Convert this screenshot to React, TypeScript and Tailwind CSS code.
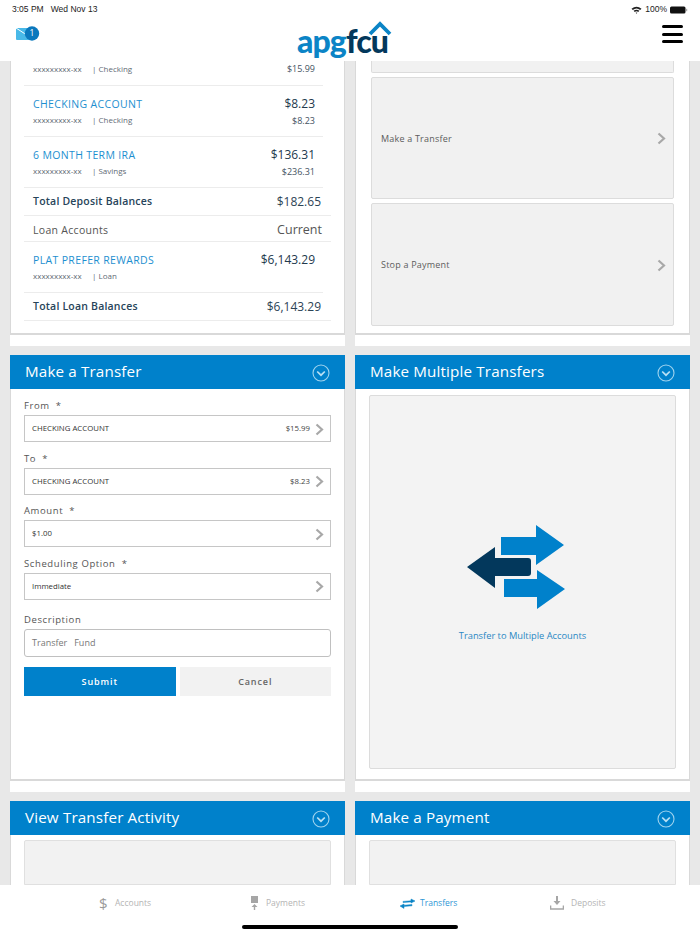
import React from 'react';

const font = { fontFamily: '"Open Sans", sans-serif' };

const Chevron: React.FC = () => (
    <svg width="9" height="13" viewBox="0 0 9 13" className="shrink-0">
        <path d="M1.5 1.5 L7 6.5 L1.5 11.5" fill="none" stroke="#a8a8a8" strokeWidth="2.2" />
    </svg>
);

const PanelHeader: React.FC<{ title: string }> = ({ title }) => (
    <div className="h-[34px] shrink-0 bg-[#0081cb] -mx-px flex items-center justify-between pl-[15px] pr-[15px] text-white">
        <span className="text-[15.2px] tracking-[0.15px] leading-none -mt-[1px]">{title}</span>
        <svg width="18" height="18" viewBox="0 0 18 18" className="mt-[2px]">
            <circle cx="9" cy="9" r="8" fill="none" stroke="#9fd3ee" strokeWidth="1.1" />
            <path d="M5.2 7.5 L9 11.2 L12.8 7.5" fill="none" stroke="#b9e0f4" strokeWidth="1.7" />
        </svg>
    </div>
);

const AccountRow: React.FC<{ name: string; kind: string; amount: string; sub?: string }> = ({ name, kind, amount, sub }) => (
    <div className="h-[51px] mr-[8px] border-b border-[#ececec] pl-[9px] pr-[8px] flex justify-between">
        <div className="pt-[11px]">
            <div className="text-[10.5px] leading-[14px] tracking-[0.35px] text-[#1d8fd0]">{name}</div>
            <div className="mt-[3px] text-[8px] leading-[12px] text-[#5f6b75] flex">
                <span className="w-[59px]">xxxxxxxxx-xx</span>
                <span>| {kind}</span>
            </div>
        </div>
        <div className="pt-[10px] text-right">
            <div className="text-[12px] leading-[16px] text-[#22394d]">{amount}</div>
            {sub && <div className="mt-[3px] text-[9px] leading-[12px] text-[#44535f]">{sub}</div>}
        </div>
    </div>
);

const TotalRow: React.FC<{ label: string; amount: string }> = ({ label, amount }) => (
    <div className="h-[28px] border-b border-[#ececec] pl-[9px] pr-[10px] flex items-center justify-between">
        <span className="text-[10.5px] font-semibold tracking-[0.2px] text-[#27445a]">{label}</span>
        <span className="text-[12px] text-[#2c4355]">{amount}</span>
    </div>
);

const Tile: React.FC<{ label: string; className: string }> = ({ label, className }) => (
    <div className={`${className} bg-[#f1f1f1] border border-[#dcdcdc] rounded-[2px] pt-[1px] pl-[9px] pr-[7px] flex items-center justify-between`}>
        <span className="text-[9px] text-[#5c5c5c] tracking-[0.2px]">{label}</span>
        <Chevron />
    </div>
);

const Field: React.FC<{ label: string; value: string; amount?: string }> = ({ label, value, amount }) => (
    <div className="h-[52.5px]">
        <div className="h-[25px] pt-[9px] text-[9.5px] leading-[14px] tracking-[0.6px] text-[#555]">
            {label}&nbsp;&nbsp;*
        </div>
        <div className="h-[27px] border border-[#c6c6c6] pt-[1px] pl-[7px] pr-[6px] flex items-center">
            <span className="text-[7.8px] text-[#333] flex-1">{value}</span>
            {amount && <span className="text-[7.8px] text-[#444] mr-[5px]">{amount}</span>}
            <Chevron />
        </div>
    </div>
);

const TransferArrows: React.FC = () => (
    <svg width="100" height="86" viewBox="0 0 100 86" className="mr-[13px]">
        <path d="M35 12 H70 V0 L98 20 L70 40 V30 H35 Z" fill="#0081cb" />
        <path d="M38 54 H71 V45 L99 64 L71 84 V72 H38 Z" fill="#0081cb" />
        <path d="M1 42 L29 22 V33 H62 Q65 33 65 36 V48 Q65 51 62 51 H29 V63 Z" fill="#03385c" />
    </svg>
);

const TabItem: React.FC<{ label: string; active?: boolean; icon: React.ReactNode; className: string; gap: string }> = ({ label, active, icon, className, gap }) => (
    <div className={`${className} ${gap} flex items-center text-[8.5px] ${active ? 'text-[#2f97d6]' : 'text-[#b4b4b4]'}`}>
        {icon}
        <span>{label}</span>
    </div>
);

const App: React.FC = () => {
    return (
        <div style={font} className="h-[934px] w-[700px] bg-[#e8e8e8] flex flex-col overflow-hidden">
            {/* status bar + nav */}
            <header className="h-[61px] shrink-0 bg-white relative">
                <div className="h-[17px] pt-[2px] pl-[12px] pr-[12px] flex items-center justify-between text-[8.5px] text-[#222]" style={{ fontFamily: '"Liberation Sans", sans-serif' }}>
                    <span>3:05 PM&nbsp;&nbsp;&nbsp;Wed Nov 13</span>
                    <span className="flex items-center gap-[3px]">
                        <svg width="11" height="8" viewBox="0 0 11 8">
                            <path d="M0.5 2.8 Q5.5 -1.2 10.5 2.8 L9.2 4 Q5.5 1 1.8 4 Z M2.6 4.8 Q5.5 2.6 8.4 4.8 L7.2 6 Q5.5 4.7 3.8 6 Z M4.6 6.8 Q5.5 6 6.4 6.8 L5.5 7.8 Z" fill="#222" />
                        </svg>
                        <span>100%</span>
                        <svg width="18" height="8" viewBox="0 0 18 8">
                            <rect x="0" y="0.5" width="15.5" height="7" rx="1.5" fill="#111" />
                            <rect x="16.2" y="2.8" width="1" height="2.4" fill="#999" />
                        </svg>
                    </span>
                </div>
                <div className="absolute left-[16px] top-[26px] w-[24px] h-[15px]">
                    <svg width="24" height="15" viewBox="0 0 24 15">
                        <rect x="0" y="2" width="18" height="12" rx="1" fill="#49b9e8" />
                        <path d="M0 2 L10 8.5" stroke="#ffffff" strokeWidth="1" />
                        <circle cx="16" cy="7.5" r="7.2" fill="#0b78bd" />
                    </svg>
                    <span className="absolute left-[11px] top-[0.5px] w-[10px] text-center text-[8.5px] text-white">1</span>
                </div>
                <div className="absolute left-[297px] top-[21px] w-[96px] h-[38px]">
                    <span className="absolute left-0 top-[1px] text-[32px] leading-[38px] font-black tracking-[-0.9px] text-[#0b84c6] flex" style={{ fontFamily: 'Lato, sans-serif' }}>
                        apg<span className="text-[#03385c]">fcu</span>
                    </span>
                    <svg width="24" height="15" viewBox="0 0 24 15" className="absolute left-[71px] top-0">
                        <path d="M2 13 L12 3 L22 13" fill="none" stroke="#0b84c6" strokeWidth="3.8" />
                    </svg>
                </div>
                <div className="absolute left-[662px] top-[25px] w-[21px] flex flex-col gap-[4.5px]">
                    <div className="h-[3px] rounded-full bg-black" />
                    <div className="h-[3px] rounded-full bg-black" />
                    <div className="h-[3px] rounded-full bg-black" />
                </div>
            </header>

            <main className="flex-1 overflow-hidden px-[10px]">
                <div className="grid grid-cols-2 gap-x-[10px]">
                    {/* first row, scrolled partly under the header */}
                    <section className="h-[274px] bg-white border-x border-b-2 border-[#d9d9d9] px-[13px]">
                        <div className="h-[25px] mr-[8px] border-b border-[#ececec] pl-[9px] pr-[8px] flex justify-between items-start pt-[2px]">
                            <div className="text-[8px] leading-[12px] text-[#5f6b75] flex">
                                <span className="w-[59px]">xxxxxxxxx-xx</span>
                                <span>| Checking</span>
                            </div>
                            <div className="text-[9px] leading-[12px] text-[#44535f]">$15.99</div>
                        </div>
                        <AccountRow name="CHECKING ACCOUNT" kind="Checking" amount="$8.23" sub="$8.23" />
                        <AccountRow name="6 MONTH TERM IRA" kind="Savings" amount="$136.31" sub="$236.31" />
                        <TotalRow label="Total Deposit Balances" amount="$182.65" />
                        <div className="h-[26px] pt-[4px] border-b border-[#ececec] pl-[9px] pr-[9px] flex items-center justify-between text-[#555]">
                            <span className="text-[10.5px] tracking-[0.3px]">Loan Accounts</span>
                            <span className="text-[12.5px]">Current</span>
                        </div>
                        <AccountRow name="PLAT PREFER REWARDS" kind="Loan" amount="$6,143.29" />
                        <TotalRow label="Total Loan Balances" amount="$6,143.29" />
                    </section>
                    <section className="h-[274px] bg-white border-x border-b-2 border-[#d9d9d9] px-[15px] flex flex-col gap-[4px]">
                        <div className="h-[12px] shrink-0 bg-[#f1f1f1] border border-t-0 border-[#dcdcdc] rounded-b-[2px]" />
                        <Tile label="Make a Transfer" className="h-[122px] shrink-0" />
                        <Tile label="Stop a Payment" className="h-[123px] shrink-0" />
                    </section>
                    <div className="h-[11px] bg-white" />
                    <div className="h-[11px] bg-white" />
                    <div className="col-span-2 h-[9px]" />

                    {/* second row */}
                    <section className="h-[426px] bg-white border-x border-b-2 border-[#d9d9d9] flex flex-col">
                        <PanelHeader title="Make a Transfer" />
                        <div className="px-[13px] pt-[1px]">
                            <Field label="From" value="CHECKING ACCOUNT" amount="$15.99" />
                            <Field label="To" value="CHECKING ACCOUNT" amount="$8.23" />
                            <Field label="Amount" value="$1.00" />
                            <Field label="Scheduling Option" value="Immediate" />
                            <div className="h-[28px] pt-[13px] text-[9.5px] leading-[14px] tracking-[0.6px] text-[#555]">Description</div>
                            <div className="mt-[1px] h-[28px] border border-[#c0c0c0] rounded-[3px] pl-[7px] flex items-center text-[9px] text-[#777]">
                                Transfer&nbsp;&nbsp;&nbsp;Fund
                            </div>
                            <div className="mt-[10px] grid grid-cols-2 gap-x-[4px]">
                                <button className="h-[29px] bg-[#0081cb] text-white text-[9px] font-semibold tracking-[0.9px]">Submit</button>
                                <button className="h-[29px] bg-[#f2f2f2] text-[#666] text-[9px] font-semibold tracking-[0.9px]">Cancel</button>
                            </div>
                        </div>
                    </section>
                    <section className="h-[426px] bg-white border-x border-b-2 border-[#d9d9d9] flex flex-col">
                        <PanelHeader title="Make Multiple Transfers" />
                        <div className="mx-[13px] mt-[6px] h-[374px] bg-[#f3f3f3] border border-[#dcdcdc] rounded-[2px] flex flex-col items-center pt-[129px]">
                            <TransferArrows />
                            <div className="mt-[18px] text-[9.3px] leading-[14px] text-[#2a88c4]">Transfer to Multiple Accounts</div>
                        </div>
                    </section>
                    <div className="h-[11px] bg-white" />
                    <div className="h-[11px] bg-white" />
                    <div className="col-span-2 h-[9px]" />

                    {/* third row, runs under the tab bar */}
                    <section className="h-[84px] bg-white border-x border-[#d9d9d9] flex flex-col">
                        <PanelHeader title="View Transfer Activity" />
                        <div className="mx-[13px] mt-[5px] flex-1 bg-[#f2f2f2] border border-[#e0e0e0] rounded-t-[2px]" />
                    </section>
                    <section className="h-[84px] bg-white border-x border-[#d9d9d9] flex flex-col">
                        <PanelHeader title="Make a Payment" />
                        <div className="mx-[13px] mt-[5px] flex-1 bg-[#f2f2f2] border border-[#e0e0e0] rounded-t-[2px]" />
                    </section>
                </div>
            </main>

            <footer className="h-[49px] shrink-0 bg-white relative">
                <div className="h-[36px] flex items-center">
                    <TabItem
                        className="w-[200px] pl-[99px]"
                        gap="gap-[7px]"
                        label="Accounts"
                        icon={<span className="text-[15px] leading-none text-[#9a9a9a] w-[9px]">$</span>}
                    />
                    <TabItem
                        className="w-[198px] pl-[50px]"
                        gap="gap-[7px]"
                        label="Payments"
                        icon={
                            <svg width="9" height="14" viewBox="0 0 9 14">
                                <rect x="1" y="0" width="7" height="7" fill="#a6a6a6" />
                                <path d="M4.5 8 L1.5 11 H3.8 V14 H5.2 V11 H7.5 Z" fill="#a6a6a6" />
                            </svg>
                        }
                    />
                    <TabItem
                        className="w-[150px] pl-[2px]"
                        gap="gap-[5px]"
                        active
                        label="Transfers"
                        icon={
                            <svg width="15" height="11" viewBox="0 0 15 11">
                                <path d="M3 3.4 L11 2.8 V1 L15 3 L11 5 V3.9 L3 4.5 Z" fill="#0b84c6" stroke="#0b84c6" strokeWidth="0.5" />
                                <path d="M12 6.6 L4 7.2 V6 L0 8 L4 10.4 V8.4 L12 7.8 Z" fill="#0b84c6" stroke="#0b84c6" strokeWidth="0.5" />
                            </svg>
                        }
                    />
                    <TabItem
                        className="flex-1 pl-[2px]"
                        gap="gap-[7px]"
                        label="Deposits"
                        icon={
                            <svg width="14" height="14" viewBox="0 0 14 14">
                                <path d="M6 0 H8 V5 H10.5 L7 9 L3.5 5 H6 Z" fill="#a6a6a6" />
                                <path d="M0.5 9.5 V13 H13.5 V9.5" fill="none" stroke="#a6a6a6" strokeWidth="1.6" />
                            </svg>
                        }
                    />
                </div>
                <div className="absolute left-[242px] top-[40px] w-[216px] h-[4px] rounded-full bg-black" />
            </footer>
        </div>
    );
};

export default App;
